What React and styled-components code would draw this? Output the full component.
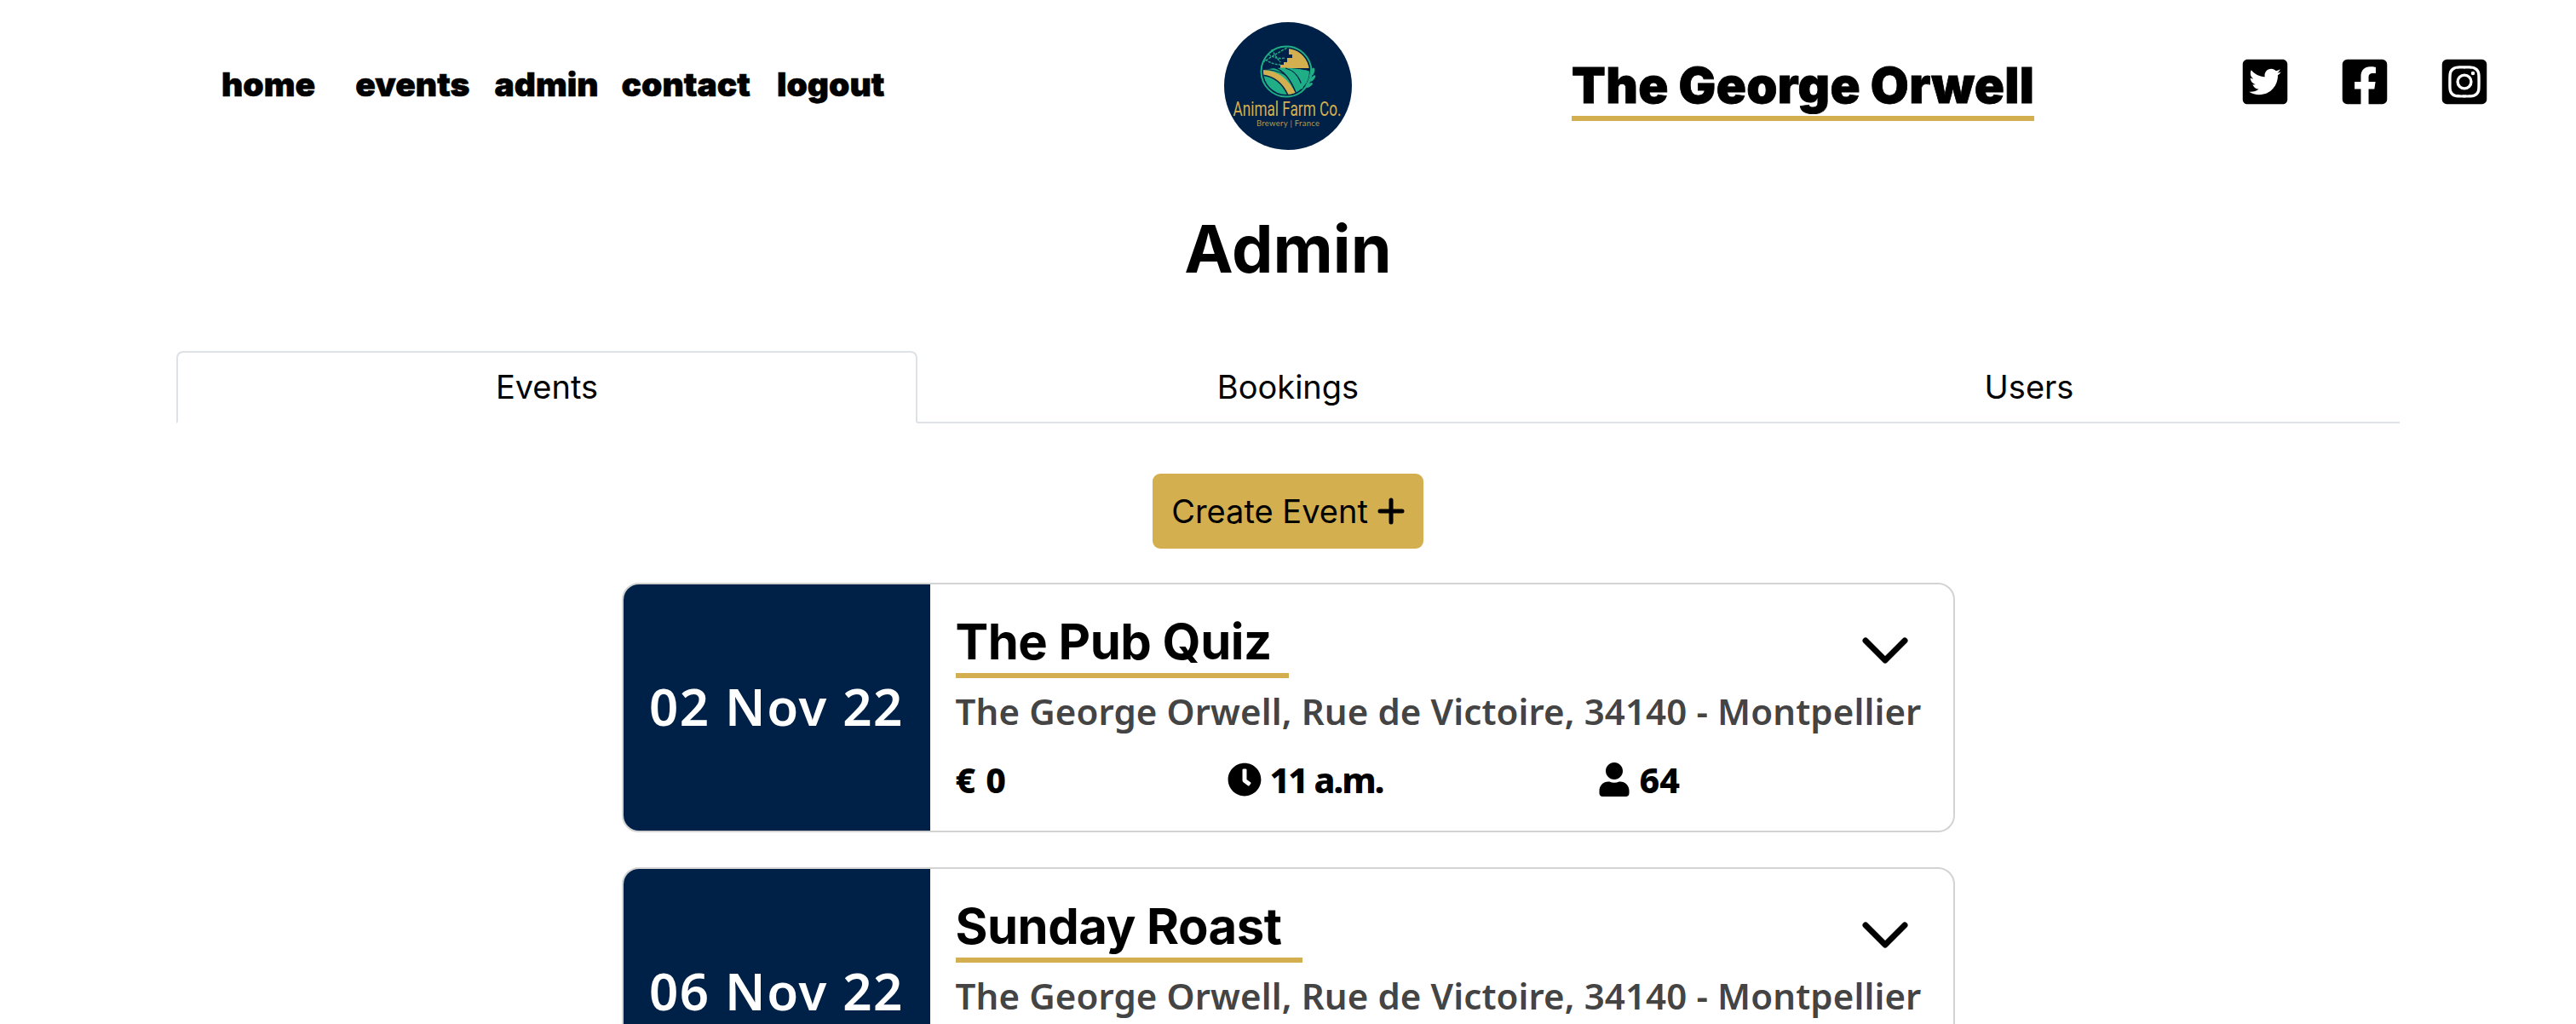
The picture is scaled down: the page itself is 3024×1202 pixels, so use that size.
import React from 'react';
import styled, { createGlobalStyle } from 'styled-components';
import { FaTwitterSquare, FaFacebookSquare, FaInstagramSquare, FaClock, FaUser } from 'react-icons/fa';

const Global = createGlobalStyle`
  html, body { margin: 0; padding: 0; background: #fff; overflow: hidden; height: 1202px; }
  body { font-family: Inter, "Liberation Sans", Arial, sans-serif; color: #000; }
`;
const Page = styled.div`width: 3024px; height: 1202px; overflow: hidden;`;
const Header = styled.header`height: 200px; display: flex; align-items: center; padding-left: 260px;`;
const Nav = styled.nav`display: flex; width: 1177px; align-items: center; margin-top: -3px;`;
const NavLink = styled.a`
  font-family: Inter, sans-serif; font-weight: 900; font-size: 39px;
  margin-right: ${p => p.$gap}px; -webkit-text-stroke: 0.6px #000;
`;
const Logo = styled.svg`width: 150px; height: 150px; margin-top: 1px; flex: none;`;
const Brand = styled.div`margin-left: 258px; width: 543px; flex: none; margin-top: 15px;`;
const BrandName = styled.div`
  font-family: Inter, sans-serif; font-weight: 900; font-size: 58px; line-height: 54px; padding-bottom: 9px; letter-spacing: 0.35px;
  border-bottom: 6px solid #d4af4f; white-space: nowrap; -webkit-text-stroke: 0.8px #000;
`;
const Socials = styled.div`display: flex; margin-left: 241px; gap: 57px; margin-top: -8px;`;
const Social = styled.span`display: block; line-height: 0; font-size: 60px;`;
const Title = styled.h1`
  margin: 58px 0 0; text-align: center; font-family: Inter, sans-serif; font-weight: 700; font-size: 77px; line-height: 68px;
  height: 84px;
`;
const Tabs = styled.div`
  margin: 70px 207px 0; display: flex; width: 2610px; height: 83px; border-bottom: 2px solid #dee2e6;
`;
const Tab = styled.div`
  flex: 1; display: flex; align-items: center; justify-content: center; font-size: 38px; box-sizing: border-box;
  height: 85px; border: 2px solid ${p => p.$active ? '#dee2e6' : 'transparent'};
  border-bottom-color: ${p => p.$active ? '#fff' : 'transparent'}; border-radius: 8px 8px 0 0;
  background: ${p => p.$active ? '#fff' : 'transparent'}; padding-bottom: 2px;
`;
const Center = styled.div`display: flex; flex-direction: column; align-items: center;`;
const CreateButton = styled.button`
  margin-top: 59px; width: 318px; height: 88px; background: #d4af4f; border: none; border-radius: 9px;
  font-family: Inter, sans-serif; font-size: 38px; color: #000; display: flex; align-items: center; justify-content: center; gap: 11px; padding: 0;
`;
const PlusIcon = styled.svg`width: 32px; height: 32px; flex: none;`;
const Card = styled.article`
  width: 1565px; height: 293px; margin-top: ${p => p.$first ? 40 : 41}px; flex: none; box-sizing: border-box;
  border: 2px solid #d3d3d3; border-radius: 20px; display: flex; overflow: hidden;
`;
const DatePanel = styled.div`
  width: 360px; flex: none; background: #002147; color: #fff; display: flex; align-items: center; justify-content: center;
  font-family: "Noto Sans", sans-serif; font-weight: 600; font-size: 60px; letter-spacing: 1.6px; white-space: nowrap; padding-bottom: 3px; box-sizing: border-box;
`;
const Body = styled.div`flex: 1; padding: 30px 0 0 30px; position: relative; min-width: 0;`;
const EventTitle = styled.h2`
  display: block; width: fit-content; margin: 0; font-family: Inter, sans-serif; font-weight: 700; font-size: 58px; line-height: 74px; height: 74px;
  padding-right: ${p => p.$pad}px; border-bottom: 6px solid #d4af4f; letter-spacing: -0.5px; white-space: nowrap;
`;
const Address = styled.p`
  margin: 14px 0 0; font-family: "Noto Sans", sans-serif; font-weight: 600; font-size: 42px; line-height: 50px; color: #444; white-space: nowrap; letter-spacing: 0.12px;
`;
const Meta = styled.div`display: flex; align-items: center; margin-top: 31px; height: 48px; font-family: "Noto Sans", sans-serif; font-weight: 800; font-size: 41px;`;
const MetaItem = styled.span`
  display: flex; align-items: center; gap: ${p => p.$gap}px; width: ${p => p.$w}px; flex: none; letter-spacing: ${p => p.$ls || 0}px;
`;
const Chevron = styled.svg`position: absolute; right: 52px; top: 61px; width: 56px; height: 36px;`;

const events = [
  { date: '02 Nov 22', title: 'The Pub Quiz', pad: 20, price: '0', time: '11 a.m.', people: '64' },
  { date: '06 Nov 22', title: 'Sunday Roast', pad: 24, price: '0', time: '11 a.m.', people: '64' },
];

const teal = '#1fae85';
const gold = '#d4af4f';
const navy = '#002147';

function LogoMark() {
  return (
    <Logo viewBox="0 0 150 150">
      <defs>
        <clipPath id="inner"><circle cx="73" cy="58" r="27" /></clipPath>
      </defs>
      <circle cx="75" cy="75" r="75" fill={navy} />
      <circle cx="73" cy="58" r="29.5" fill="none" stroke={teal} strokeWidth="2" />
      <g clipPath="url(#inner)">
        <path d="M76 30 V38 H80 V42 H74 V47 H70 V50 H66 V54 H102 V30z" fill={gold} />
        <path d="M46 56 Q72 50 102 58 V90 H44z" fill={teal} />
        <path d="M58 53 Q76 58 86 88" fill="none" stroke={navy} strokeWidth="1.5" />
        <path d="M72 54 Q88 58 92 78" fill="none" stroke={navy} strokeWidth="1.2" />
        <path d="M44 56 Q72 56 86 88 L76 88 Q66 64 44 62z" fill={gold} />
        <path d="M44 55.5 Q60 55 72 62" fill="none" stroke={navy} strokeWidth="1" />
        <path d="M44 62 Q66 64 76 88" fill="none" stroke={navy} strokeWidth="1.5" />
      </g>
      <g fill="none" stroke={teal} strokeWidth="1.4" strokeDasharray="3 1.2">
        <path d="M46 47 Q56 40 74 30" />
        <path d="M52 38 Q62 44 72 42" />
        <path d="M56 32 Q60 40 66 47" />
        <path d="M48 44 Q58 50 66 50" />
      </g>
      <g fill={teal}>
        <path d="M91 82 Q100 72 102 56" fill="none" stroke={teal} strokeWidth="1.4" />
        <ellipse cx="104" cy="58" rx="2" ry="4.5" transform="rotate(15 104 58)" />
        <ellipse cx="97" cy="60" rx="1.8" ry="4" transform="rotate(-20 97 60)" />
        <ellipse cx="104" cy="66" rx="1.8" ry="4.5" transform="rotate(40 104 66)" />
        <ellipse cx="95" cy="68" rx="1.8" ry="4" transform="rotate(-15 95 68)" />
        <ellipse cx="100" cy="74" rx="1.8" ry="4.5" transform="rotate(55 100 74)" />
        <ellipse cx="91" cy="75" rx="1.6" ry="3.6" transform="rotate(-5 91 75)" />
      </g>
      <text x="74" y="110" textAnchor="middle" fontFamily="Roboto, sans-serif" fontSize="23" fontWeight="400" fill={gold} textLength="127" lengthAdjust="spacingAndGlyphs">Animal Farm Co.</text>
      <text x="75" y="122" textAnchor="middle" fontFamily="Lato, sans-serif" fontSize="9.5" fill="#b09a55" textLength="74">Brewery | France</text>
    </Logo>
  );
}

export default function App() {
  return (
    <Page>
      <Global />
      <Header>
        <Nav>
          <NavLink $gap={47}>home</NavLink>
          <NavLink $gap={29}>events</NavLink>
          <NavLink $gap={27}>admin</NavLink>
          <NavLink $gap={31}>contact</NavLink>
          <NavLink $gap={0}>logout</NavLink>
        </Nav>
        <LogoMark />
        <Brand><BrandName>The George Orwell</BrandName></Brand>
        <Socials>
          <Social><FaTwitterSquare /></Social>
          <Social><FaFacebookSquare /></Social>
          <Social><FaInstagramSquare /></Social>
        </Socials>
      </Header>
      <Title>Admin</Title>
      <Tabs>
        <Tab $active>Events</Tab>
        <Tab>Bookings</Tab>
        <Tab>Users</Tab>
      </Tabs>
      <Center>
        <CreateButton>
          Create Event
          <PlusIcon viewBox="0 0 32 32"><path d="M16 3 V29 M3 16 H29" fill="none" stroke="#000" strokeWidth="5" strokeLinecap="round" /></PlusIcon>
        </CreateButton>
        {events.map((e, i) => (
          <Card key={e.date} $first={i === 0}>
            <DatePanel>{e.date}</DatePanel>
            <Body>
              <EventTitle $pad={e.pad}>{e.title}</EventTitle>
              <Chevron viewBox="0 0 56 36"><path d="M5 5 L28 28 L51 5" fill="none" stroke="#000" strokeWidth="7" strokeLinecap="round" strokeLinejoin="round" /></Chevron>
              <Address>The George Orwell, Rue de Victoire, 34140 - Montpellier</Address>
              <Meta>
                <MetaItem $w={319} $gap={12}><span>€</span>{e.price}</MetaItem>
                <MetaItem $w={434} $gap={10} $ls={-2}><FaClock size={40} />{e.time}</MetaItem>
                <MetaItem $gap={10}><FaUser size={40} />{e.people}</MetaItem>
              </Meta>
            </Body>
          </Card>
        ))}
      </Center>
    </Page>
  );
}
